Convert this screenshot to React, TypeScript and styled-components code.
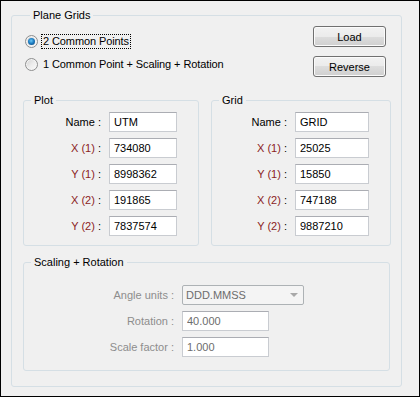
import React from "react";
import styled, { createGlobalStyle, css } from "styled-components";

const Global = createGlobalStyle`
  html, body { margin: 0; padding: 0; background: #fff; }
  body { font-family: "Liberation Sans", Arial, sans-serif; font-size: 11px; }
  * { box-sizing: border-box; }
`;

const Window = styled.div`
  width: 420px;
  height: 397px;
  border: 1px solid #000;
  background: #f0f0f0;
  padding: 7px 0 0 10px;
  color: #000;
  font-family: "Liberation Sans", Arial, sans-serif;
  font-size: 11px;
`;

const Group = styled.fieldset<{ $w: number; $pad: string }>`
  margin: 0;
  width: ${(p) => p.$w}px;
  border: 1px solid #d5dfe5;
  border-radius: 3px;
  padding: ${(p) => p.$pad};
  min-width: 0;
`;

const Legend = styled.legend`
  margin-left: 7px;
  padding: 0 3px;
  line-height: 14px;
  height: 14px;
  font-size: 11px;
  color: #000;
`;

const TopSection = styled.div`
  display: flex;
  justify-content: space-between;
  margin-top: 4px;
  padding: 0 5px 0 2px;
`;

const RadioColumn = styled.div`
  display: flex;
  flex-direction: column;
  gap: 2px;
  padding-top: 5px;
`;

const RadioRow = styled.label`
  display: flex;
  align-items: center;
  height: 21px;
  gap: 3px;
`;

const RadioCircle = styled.span<{ $checked?: boolean }>`
  position: relative;
  width: 13px;
  height: 13px;
  border-radius: 50%;
  border: 1px solid #8e8f8f;
  background: linear-gradient(135deg, #d2d2d2 0%, #eeeeee 55%, #fbfbfb 100%);
  box-shadow: inset 0 0 0 1px #f4f4f4;
  flex: none;
  ${(p) =>
    p.$checked &&
    css`
      &::after {
        content: "";
        position: absolute;
        left: 2px;
        top: 2px;
        width: 7px;
        height: 7px;
        border-radius: 50%;
        background: radial-gradient(circle at 45% 40%, #6cc8f5 0%, #1f7fc4 45%, #0a3d6e 100%);
      }
    `}
`;

const RadioText = styled.span<{ $focus?: boolean }>`
  padding: 0 1px;
  line-height: 13px;
  letter-spacing: -0.1px;
  border: 1px dotted ${(p) => (p.$focus ? "#000" : "transparent")};
`;

const ButtonColumn = styled.div`
  display: flex;
  flex-direction: column;
  gap: 9px;
`;

const Button = styled.button`
  width: 73px;
  height: 21px;
  padding: 0;
  border: 1px solid #707070;
  border-radius: 3px;
  background: linear-gradient(#f2f2f2 0%, #ebebeb 50%, #dddddd 50%, #cfcfcf 100%);
  box-shadow: inset 0 0 0 1px #fbfbfb;
  font-family: "Liberation Sans", Arial, sans-serif;
  font-size: 11px;
  color: #000;
`;

const PanelsRow = styled.div`
  display: flex;
  gap: 12px;
  margin-top: 16px;
`;

const FormGrid = styled.div<{ $labelW: number; $inputW: number; $gap: number }>`
  display: grid;
  grid-template-columns: ${(p) => p.$labelW}px ${(p) => p.$inputW}px;
  column-gap: ${(p) => p.$gap}px;
  row-gap: 6px;
  align-items: center;
`;

const FieldLabel = styled.span<{ $disabled?: boolean }>`
  text-align: right;
  white-space: nowrap;
  color: ${(p) => (p.$disabled ? "#8d8d8d" : "#000")};
`;

const Coord = styled.span`
  color: #8b1d1d;
`;

const TextBox = styled.input<{ $disabled?: boolean }>`
  width: 100%;
  height: 20px;
  margin: 0;
  padding: 0 0 0 4px;
  border: 1px solid #c9ccd1;
  border-top-color: #abadb3;
  border-radius: 0;
  background: #fff;
  font-family: "Liberation Sans", Arial, sans-serif;
  font-size: 11px;
  color: ${(p) => (p.$disabled ? "#6d6d6d" : "#000")};
  outline: none;
`;

const Combo = styled.div<{ $w: number }>`
  width: ${(p) => p.$w}px;
  height: 20px;
  display: flex;
  align-items: center;
  justify-content: space-between;
  padding: 0 5px 0 3px;
  border: 1px solid #adb2b5;
  border-radius: 2px;
  background: #f4f4f4;
  color: #6d6d6d;
`;

const Arrow = styled.span`
  width: 0;
  height: 0;
  border-left: 4px solid transparent;
  border-right: 4px solid transparent;
  border-top: 4px solid #a8a8a8;
`;

const ScalingWrap = styled.div`
  margin-top: 9px;
`;

type Row = { label: React.ReactNode; value: string };

const coordLabel = (c: string) => (
  <>
    <Coord>{c}</Coord> :
  </>
);

const plotRows: Row[] = [
  { label: "Name :", value: "UTM" },
  { label: coordLabel("X (1)"), value: "734080" },
  { label: coordLabel("Y (1)"), value: "8998362" },
  { label: coordLabel("X (2)"), value: "191865" },
  { label: coordLabel("Y (2)"), value: "7837574" },
];

const gridRows: Row[] = [
  { label: "Name :", value: "GRID" },
  { label: coordLabel("X (1)"), value: "25025" },
  { label: coordLabel("Y (1)"), value: "15850" },
  { label: coordLabel("X (2)"), value: "747188" },
  { label: coordLabel("Y (2)"), value: "9887210" },
];

function PointsPanel({ title, rows, width, labelW, inputW }: { title: string; rows: Row[]; width: number; labelW: number; inputW: number }) {
  return (
    <Group $w={width} $pad="5px 0 9px 0">
      <Legend>{title}</Legend>
      <FormGrid $labelW={labelW} $inputW={inputW} $gap={8}>
        {rows.map((r, i) => (
          <React.Fragment key={i}>
            <FieldLabel>{r.label}</FieldLabel>
            <TextBox value={r.value} readOnly />
          </React.Fragment>
        ))}
      </FormGrid>
    </Group>
  );
}

export default function App() {
  return (
    <>
      <Global />
      <Window>
        <Group $w={391} $pad="0 10px 15px 11px">
          <Legend>Plane Grids</Legend>
          <TopSection>
            <RadioColumn>
              <RadioRow>
                <RadioCircle $checked />
                <RadioText $focus>2 Common Points</RadioText>
              </RadioRow>
              <RadioRow>
                <RadioCircle />
                <RadioText>1 Common Point + Scaling + Rotation</RadioText>
              </RadioRow>
            </RadioColumn>
            <ButtonColumn>
              <Button>Load</Button>
              <Button>Reverse</Button>
            </ButtonColumn>
          </TopSection>
          <PanelsRow>
            <PointsPanel title="Plot" rows={plotRows} width={176} labelW={77} inputW={68} />
            <PointsPanel title="Grid" rows={gridRows} width={180} labelW={75} inputW={74} />
          </PanelsRow>
          <ScalingWrap>
            <Group $w={367} $pad="16px 0 13px 0">
              <Legend>Scaling + Rotation</Legend>
              <FormGrid $labelW={150} $inputW={87} $gap={8}>
                <FieldLabel $disabled>Angle units :</FieldLabel>
                <Combo $w={122}>
                  <span>DDD.MMSS</span>
                  <Arrow />
                </Combo>
                <FieldLabel $disabled>Rotation :</FieldLabel>
                <TextBox $disabled value="40.000" readOnly />
                <FieldLabel $disabled>Scale factor :</FieldLabel>
                <TextBox $disabled value="1.000" readOnly />
              </FormGrid>
            </Group>
          </ScalingWrap>
        </Group>
      </Window>
    </>
  );
}
